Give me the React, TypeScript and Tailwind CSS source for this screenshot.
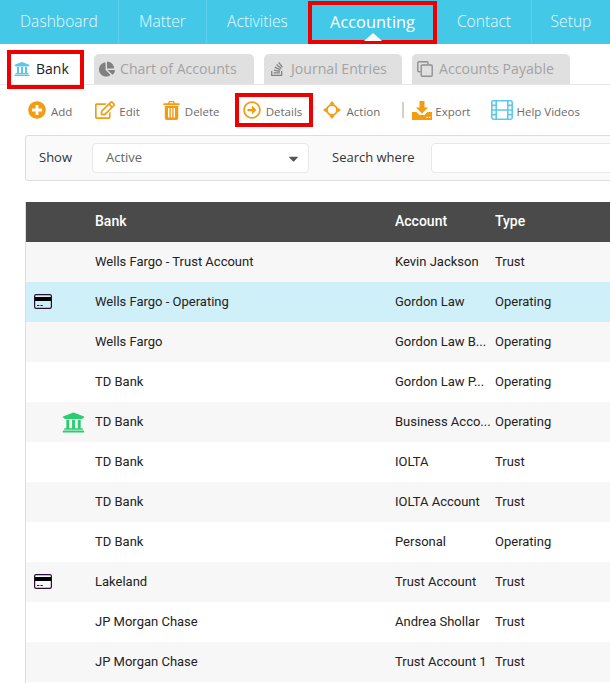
import { ReactNode } from "react";
import {
  FaUniversity,
  FaChartPie,
  FaStackOverflow,
  FaPlusCircle,
  FaRegEdit,
  FaRegArrowAltCircleRight,
  FaCaretDown,
} from "react-icons/fa";

const rows = [
  { bank: "Wells Fargo - Trust Account", account: "Kevin Jackson", type: "Trust" },
  { bank: "Wells Fargo - Operating", account: "Gordon Law", type: "Operating", card: true, active: true },
  { bank: "Wells Fargo", account: "Gordon Law B...", type: "Operating" },
  { bank: "TD Bank", account: "Gordon Law P...", type: "Operating" },
  { bank: "TD Bank", account: "Business Acco...", type: "Operating", bankIcon: true },
  { bank: "TD Bank", account: "IOLTA", type: "Trust" },
  { bank: "TD Bank", account: "IOLTA Account", type: "Trust" },
  { bank: "TD Bank", account: "Personal", type: "Operating" },
  { bank: "Lakeland", account: "Trust Account", type: "Trust", card: true },
  { bank: "JP Morgan Chase", account: "Andrea Shollar", type: "Trust" },
  { bank: "JP Morgan Chase", account: "Trust Account 1", type: "Trust" },
];

function NavItem({ label, width, border = true }: { label: string; width: string; border?: boolean }) {
  return (
    <div className={`${width} ${border ? "border-r border-[#5fd0ec]" : ""} h-full flex items-center justify-center shrink-0 text-[15.6px] font-light text-[#e9f9fd]`}>
      {label}
    </div>
  );
}

function Tab({ icon, label, width, gap = "gap-[6px]" }: { icon: ReactNode; label: string; width: string; gap?: string }) {
  return (
    <div className={`${width} h-[30px] bg-[#e0e0e0] rounded-t-[5px] flex items-center ${gap} pl-[5px] pb-[1px] text-[14.1px] text-[#a3a3a3] shrink-0`}>
      {icon}
      <span>{label}</span>
    </div>
  );
}

function Tool({ icon, label, gap }: { icon: ReactNode; label: string; gap: string }) {
  return (
    <div className={`flex items-center ${gap} text-[11.5px] text-[#6b6b6b]`}>
      {icon}
      <span className="pt-[3px]">{label}</span>
    </div>
  );
}

function TrashIcon() {
  return (
    <svg width="17" height="19" viewBox="0 0 17 19" fill="#f39c12">
      <path d="M6 0h5l1 2.2h4.6v2H.4v-2H5zM6.8 1.2l-.4 1h4.2l-.4-1z" />
      <path d="M1.8 5h13.4v12a2 2 0 0 1-2 2H3.8a2 2 0 0 1-2-2z" />
      <path d="M5 7h1.4v9.5H5zM7.8 7h1.4v9.5H7.8zM10.6 7H12v9.5h-1.4z" fill="#fff" />
    </svg>
  );
}

function MoveIcon() {
  return (
    <svg width="18" height="18" viewBox="0 0 18 18" fill="#f39c12">
      <circle cx="9" cy="9" r="5" fill="none" stroke="#f39c12" strokeWidth="1.8" />
      <path d="M9 0l2.8 3.6H6.2zM9 18l2.8-3.6H6.2zM0 9l3.6-2.8v5.6zM18 9l-3.6-2.8v5.6z" />
    </svg>
  );
}

function ExportIcon() {
  return (
    <svg width="20" height="19" viewBox="0 0 20 19" fill="#f39c12">
      <path d="M7.5 0h5v6.5H16l-6 6-6-6h3.5z" />
      <path d="M0 11h4.5l3 3h5l3-3H20v8H0z" />
      <path d="M14.5 15.8h1.3v1.3h-1.3zM17 15.8h1.3v1.3H17z" fill="#fff" />
    </svg>
  );
}

function FilmIcon() {
  return (
    <svg width="22" height="20" viewBox="0 0 22 20" fill="none" stroke="#5cc9ea" strokeWidth="1.6">
      <rect x="0.8" y="0.8" width="20.4" height="18.4" rx="1.6" />
      <path d="M5.2 1v18M16.8 1v18M5.2 10h11.6" />
      <path d="M1 5.4h4M1 10h4M1 14.6h4M17 5.4h4M17 10h4M17 14.6h4" />
    </svg>
  );
}

function CopyIcon() {
  return (
    <svg width="16" height="16" viewBox="0 0 16 16" fill="none" stroke="#8f8f8f" strokeWidth="1.4">
      <path d="M11 3.5V2a1.2 1.2 0 0 0-1.2-1.2H2A1.2 1.2 0 0 0 .8 2v7.5A1.2 1.2 0 0 0 2 10.7h1.5" />
      <rect x="4.2" y="4" width="11" height="11.2" rx="1.2" />
    </svg>
  );
}

function CardIcon() {
  return (
    <svg width="18" height="15" viewBox="0 0 18 15" className="ml-[8px] mb-[2px]">
      <rect x="0.6" y="0.6" width="16.8" height="13.8" rx="1.6" fill="none" stroke="#2a1030" strokeWidth="1.2" />
      <rect x="1" y="3" width="16" height="4" fill="#000" />
      <path d="M3 11h2.4v1H3zM6.4 11h2.4v1H6.4z" fill="#222" />
    </svg>
  );
}

export default function App() {
  return (
    <div className="w-[610px] h-[683px] overflow-hidden bg-white font-['Open_Sans',sans-serif]">
      <div className="h-[44px] bg-[#44c8e8] flex items-center">
        <NavItem label="Dashboard" width="w-[119px]" />
        <NavItem label="Matter" width="w-[88px]" />
        <NavItem label="Activities" width="w-[101px]" border={false} />
        <div className="relative w-[129px] h-full shrink-0 flex items-center justify-center text-[16.4px] text-white">
          Accounting
          <div className="absolute inset-x-0 top-[1px] h-[43px] border-[4px] border-[#ee0000]" />
          <div className="absolute bottom-[3px] left-1/2 -translate-x-1/2 w-0 h-0 border-x-[9px] border-x-transparent border-b-[8px] border-b-white" />
        </div>
        <NavItem label="Contact" width="w-[95px]" />
        <NavItem label="Setup" width="w-[78px]" border={false} />
      </div>

      <div className="h-[41px] pt-[10px] pl-[7px] flex items-start border-b border-[#e6e6e6]">
        <div className="relative w-[77px] h-[30px] flex items-center gap-[6px] pl-[7px] pb-[1px] text-[14px] text-[#222] shrink-0">
          <FaUniversity className="text-[#5cc6e6] text-[16px]" />
          <span>Bank</span>
          <div className="absolute left-0 right-0 top-[-4px] h-[39px] border-[4px] border-[#ee0000]" />
        </div>
        <div className="flex gap-[10px] ml-[10px]">
          <Tab icon={<FaChartPie className="text-[#808080] text-[16px]" />} label="Chart of Accounts" width="w-[160px]" gap="gap-[5px]" />
          <Tab icon={<FaStackOverflow className="text-[#808080] text-[16px]" />} label="Journal Entries" width="w-[138px]" />
          <Tab icon={<CopyIcon />} label="Accounts Payable" width="w-[158px]" />
        </div>
      </div>

      <div className="h-[50px] pl-[28px] flex items-center whitespace-nowrap">
        <Tool icon={<FaPlusCircle className="text-[#f39c12] text-[18px]" />} label="Add" gap="gap-[5px]" />
        <div className="ml-[23px]">
          <Tool icon={<FaRegEdit className="text-[#f39c12] text-[20px]" />} label="Edit" gap="gap-[4px]" />
        </div>
        <div className="ml-[23px]">
          <Tool icon={<TrashIcon />} label="Delete" gap="gap-[5px]" />
        </div>
        <div className="relative ml-[15px] w-[78px] h-[34px] shrink-0 flex items-center justify-center pr-[2px]">
          <Tool icon={<FaRegArrowAltCircleRight className="text-[#f39c12] text-[18px]" />} label="Details" gap="gap-[5px]" />
          <div className="absolute inset-0 border-[4px] border-[#ee0000]" />
        </div>
        <div className="ml-[10px]">
          <Tool icon={<MoveIcon />} label="Action" gap="gap-[6px]" />
        </div>
        <div className="ml-[22px] w-[2px] h-[16px] bg-[#d5cfc4]" />
        <div className="ml-[8px]">
          <Tool icon={<ExportIcon />} label="Export" gap="gap-[3px]" />
        </div>
        <div className="ml-[21px]">
          <Tool icon={<FilmIcon />} label="Help Videos" gap="gap-[3px]" />
        </div>
      </div>

      <div className="ml-[25px] w-[600px] h-[46px] bg-[#fafafa] border border-[#dddddd] rounded-[3px] flex items-center text-[13px] whitespace-nowrap">
        <span className="ml-[13px] w-[53px] shrink-0 text-[#333]">Show</span>
        <div className="w-[217px] h-[30px] shrink-0 bg-white border border-[#e8e8e8] rounded-[4px] flex items-center justify-between pl-[13px] pr-[7px] text-[#666]">
          <span>Active</span>
          <FaCaretDown className="text-[#555] text-[15px]" />
        </div>
        <span className="ml-[23px] w-[99px] shrink-0 text-[#333]">Search where</span>
        <div className="w-[200px] h-[30px] shrink-0 bg-white border border-[#e8e8e8] rounded-[4px]" />
      </div>

      <div className="ml-[25px] mt-[21px] h-[481px] border-l border-[#dddddd] font-['Roboto',sans-serif] text-[13px] text-[#222]">
        <div className="h-[40px] pb-[2px] bg-[#4a4a4a] flex items-center text-white text-[14px] font-medium">
          <span className="ml-[69px] w-[300px]">Bank</span>
          <span className="w-[100px]">Account</span>
          <span>Type</span>
        </div>
        {rows.map((r, i) => (
          <div
            key={i}
            className={`h-[40px] flex items-center ${r.active ? "bg-[#d0f0f9]" : i % 2 === 0 ? "bg-[#f7f7f7]" : "bg-white"}`}
          >
            <div className="w-[69px] h-full shrink-0 flex items-center">
              {r.card && <CardIcon />}
              {r.bankIcon && <FaUniversity className="ml-[36px] text-[23px] text-[#2ecc71]" />}
            </div>
            <span className="w-[300px] shrink-0">{r.bank}</span>
            <span className="w-[100px] shrink-0">{r.account}</span>
            <span>{r.type}</span>
          </div>
        ))}
      </div>
    </div>
  );
}
